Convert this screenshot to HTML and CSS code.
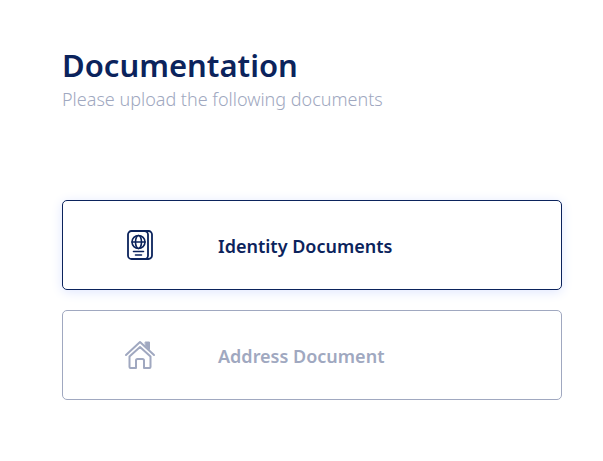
FILE: index.html
```html
<!DOCTYPE html>
<html lang="en">
<head>
<meta charset="utf-8">
<meta name="viewport" content="width=device-width, initial-scale=1">
<title>Documentation</title>
<link rel="stylesheet" href="styles.css">
</head>
<body>
<main class="page">
  <header class="intro">
    <h1 class="title">Documentation</h1>
    <p class="subtitle">Please upload the following documents</p>
  </header>
  <div class="options">
    <button type="button" class="option option-active">
      <svg class="icon" viewBox="0 0 32 32" fill="none" stroke="currentColor" stroke-width="1.800" stroke-linecap="round" stroke-linejoin="round" aria-hidden="true">
        <rect x="4" y="2" width="20" height="28" rx="3.500"/>
        <path d="M21 2h3.500a3.500 3.500 0 0 1 3.500 3.500v21a3.500 3.500 0 0 1-3.500 3.500H21"/>
        <g stroke-width="1.600">
          <circle cx="14.500" cy="13" r="6.500"/>
          <ellipse cx="14.500" cy="13" rx="3" ry="6.500"/>
          <path d="M8 13h13M9.500 22.500h10M11.500 26h6"/>
        </g>
      </svg>
      <span class="label">Identity Documents</span>
    </button>
    <button type="button" class="option">
      <svg class="icon" viewBox="0 0 32 32" fill="none" stroke="currentColor" stroke-width="2" stroke-linecap="round" stroke-linejoin="round" aria-hidden="true">
        <path d="M2 16 16 3l14 13"/>
        <path d="M5.500 17.500 16 8l10.500 9.500V28q0 1-1 1H20v-7.500q0-1.500-1.500-1.500h-5q-1.500 0-1.500 1.500V29H6.500q-1 0-1-1z"/>
        <path d="M21.500 3h4v7.500l-4-3.700z" fill="currentColor" stroke-width="1"/>
      </svg>
      <span class="label">Address Document</span>
    </button>
  </div>
</main>
</body>
</html>
```
FILE: styles.css
```css
* {
  box-sizing: border-box;
}

body {
  margin: 0;
  background: #fff;
  color: #0b235c;
  font-family: "Noto Sans", "Open Sans", sans-serif;
}

.page {
  padding: 46px 41px 60px 62px;
}

.intro {
  margin-bottom: 88px;
}

.title {
  margin: 0 0 2px;
  font-size: 31px;
  font-weight: 600;
  line-height: 38px;
}

.subtitle {
  margin: 0;
  color: #a0a8c0;
  font-size: 18px;
  font-weight: 300;
  line-height: 26px;
}

.options {
  display: flex;
  flex-direction: column;
  gap: 20px;
}

.option {
  display: grid;
  grid-template-columns: 153px 1fr;
  column-gap: 2px;
  align-items: center;
  min-height: 90px;
  padding: 0;
  border: 1px solid #a0a8c0;
  border-radius: 5px;
  background: #fff;
  color: #a0a8c0;
  font: inherit;
  font-size: 18px;
  font-weight: 600;
  text-align: left;
  cursor: pointer;
}

.option-active {
  border-color: #0b235c;
  color: #0b235c;
  box-shadow: 0 2px 12px #dfe6ff;
}

.icon {
  width: 32px;
  height: 32px;
  justify-self: center;
}

.label {
  padding-top: 2px;
}
```
